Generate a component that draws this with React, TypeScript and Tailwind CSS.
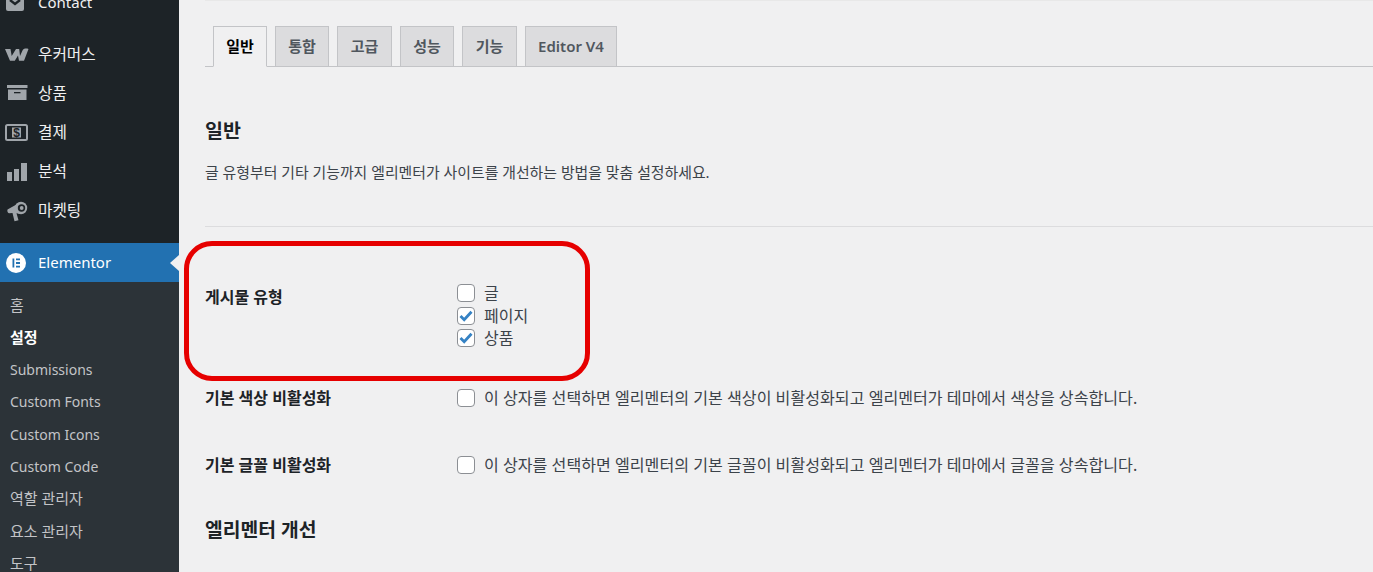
import React from "react";

const font = { fontFamily: '"Noto Sans", "Noto Sans CJK KR", sans-serif' };

function Check({ checked }: { checked?: boolean }) {
  return (
    <span className="w-[18px] h-[18px] shrink-0 rounded-[4px] border border-[#8c8f94] bg-white flex items-center justify-center">
      {checked && (
        <svg width="14" height="14" viewBox="0 0 14 14">
          <path d="M1.5 7 L5.2 10.8 L12.5 2.8" fill="none" stroke="#3582c4" strokeWidth="2.8" />
        </svg>
      )}
    </span>
  );
}

function Tab({ label, active, w }: { label: string; active?: boolean; w: string }) {
  return (
    <div
      className={`${w} h-[41px] flex items-center justify-center border border-[#c3c4c7] text-[15px] font-semibold ${
        active ? "bg-[#f0f0f1] text-black border-b-[#f0f0f1]" : "bg-[#dcdcde] text-[#50575e]"
      }`}
    >
      {label}
    </div>
  );
}

function Icon({ name }: { name: string }) {
  const c = "#a0a5aa";
  if (name === "mail")
    return (
      <svg width="20" height="20" viewBox="0 0 20 20">
        <path d="M1 2h18v14a2 2 0 0 1-2 2H3a2 2 0 0 1-2-2z" fill={c} />
        <path d="M5 7l5 4 5-4" fill="none" stroke="#1d2327" strokeWidth="2.4" />
      </svg>
    );
  if (name === "woo")
    return (
      <svg width="24" height="20" viewBox="0 0 24 20">
        <path d="M0 4h5.500l1.200 7L11 4h3.200l.8 7 2.500-5.500C18.500 3.500 21 3 23.500 4L19 15.800h-5l-1-5.300-3.200 5.300H5z" fill={c} />
      </svg>
    );
  if (name === "box")
    return (
      <svg width="23" height="20" viewBox="0 0 23 20">
        <path d="M2 1h20.500v3H2z" fill={c} />
        <path d="M3 5.500h18.500V16H3z" fill={c} />
        <path d="M9 8h6.500v1.300H9z" fill="#1d2327" />
      </svg>
    );
  if (name === "pay")
    return (
      <svg width="23" height="20" viewBox="0 0 23 20">
        <rect x="1" y="2" width="21" height="15" rx="1.500" fill="none" stroke={c} strokeWidth="2" />
        <path d="M7 4.500h9v10H7z" fill={c} />
        <text x="11.500" y="13.600" fontSize="12" fontWeight="700" textAnchor="middle" fill="#1d2327" fontFamily="Liberation Sans">$</text>
      </svg>
    );
  if (name === "bars")
    return (
      <svg width="22" height="20" viewBox="0 0 22 20">
        <path d="M2 10h5v9H2zM9 7h5v12H9zM16 1h6v18h-6z" fill={c} />
      </svg>
    );
  return (
    <svg width="23" height="22" viewBox="0 0 23 22">
      <path d="M2.500 9.500L15 2.500l2 11.500-5.500-.8 2 7-4 1L7.500 13 4 13.200C2.500 13 2 11 2.500 9.500z" fill={c} />
      <circle cx="16" cy="8" r="6.200" fill={c} />
      <circle cx="16.500" cy="8" r="3.700" fill="#1d2327" />
      <circle cx="16.700" cy="8" r="1.900" fill={c} />
    </svg>
  );
}

function MenuItem({ icon, label, size = "text-[15.700px]" }: { icon: string; label: string; size?: string }) {
  return (
    <div className={`h-[39px] flex items-center ${size} text-[#f0f0f1]`}>
      <span className="w-[38px] pl-[5px] flex items-center shrink-0">
        <Icon name={icon} />
      </span>
      {label}
    </div>
  );
}

const subs = [
  ["홈", "text-[15px]"],
  ["설정", "text-[15px]"],
  ["Submissions", "text-[14px]"],
  ["Custom Fonts", "text-[14px]"],
  ["Custom Icons", "text-[14px]"],
  ["Custom Code", "text-[14px]"],
  ["역할 관리자", "text-[15px]"],
  ["요소 관리자", "text-[15px]"],
  ["도구", "text-[15px]"],
];

function Row({ label, text }: { label: string; text: string }) {
  return (
    <div className="flex items-center h-[67px]">
      <div className="w-[252px] font-bold text-[16px] text-[#1d2327]">{label}</div>
      <div className="flex items-center text-[16.100px] text-[#3c434a]">
        <Check />
        <span className="ml-[9px]">{text}</span>
      </div>
    </div>
  );
}

export default function App() {
  return (
    <div className="relative w-[1373px] h-[572px] overflow-hidden flex bg-[#f0f0f1]" style={font}>
      <aside className="w-[179px] shrink-0 bg-[#1d2327] h-full overflow-hidden">
        <div className="-mt-[17px]">
          <MenuItem icon="mail" label="Contact" size="text-[15px]" />
          <div className="h-[13px]" />
          <MenuItem icon="woo" label="우커머스" />
          <MenuItem icon="box" label="상품" />
          <MenuItem icon="pay" label="결제" />
          <MenuItem icon="bars" label="분석" />
          <MenuItem icon="mega" label="마켓팅" />
          <div className="h-[13px]" />
          <div className="relative h-[39px] bg-[#2271b1] flex items-center text-[15px] text-white">
            <span className="w-[38px] pl-[6px] shrink-0">
              <svg width="20" height="20" viewBox="0 0 20 20">
                <circle cx="10" cy="10" r="10" fill="#fff" />
                <path d="M6.500 5.500h1.800v9H6.500zM10 5.500h4v1.700h-4zM10 9.100h4v1.800h-4zM10 12.800h4v1.700h-4z" fill="#2271b1" />
              </svg>
            </span>
            Elementor
            <span className="absolute right-0 top-[12px] w-0 h-0 border-y-[8px] border-y-transparent border-r-[9px] border-r-[#f0f0f1]" />
          </div>
          <div className="bg-[#2c3338] pt-[7px] pb-4">
            {subs.map(([s, size]) => (
              <div
                key={s}
                className={`h-[32.250px] flex items-center pl-[10px] ${size} ${
                  s === "설정" ? "font-bold text-white" : "text-[#c3c4c7]"
                }`}
              >
                {s}
              </div>
            ))}
          </div>
        </div>
      </aside>
      <main className="flex-1 min-w-0 pl-[26px]">
        <div className="h-px bg-[#e8e8e8]" />
        <div className="pt-[25px] flex items-start gap-[8px] pl-[8px] border-b border-[#c3c4c7] h-[66px]">
          <Tab label="일반" active w="w-[54px]" />
          <Tab label="통합" w="w-[54px]" />
          <Tab label="고급" w="w-[55px]" />
          <Tab label="성능" w="w-[54px]" />
          <Tab label="기능" w="w-[55px]" />
          <Tab label="Editor V4" w="w-[92px]" />
        </div>
        <h2 className="mt-[49px] text-[19.500px] leading-[30px] font-bold text-[#1d2327]">일반</h2>
        <p className="mt-[14px] text-[14.900px] leading-[24px] text-[#3c434a]">
          글 유형부터 기타 기능까지 엘리멘터가 사이트를 개선하는 방법을 맞춤 설정하세요.
        </p>
        <div className="mt-[42px] border-t border-[#dcdcde]" />
        <div className="flex mt-[55px]">
          <div className="w-[252px] mt-[4px] font-bold text-[16px] leading-[22px] text-[#1d2327]">게시물 유형</div>
          <div className="flex flex-col text-[16px] text-[#3c434a]">
            {[
              ["글", false],
              ["페이지", true],
              ["상품", true],
            ].map(([l, c]) => (
              <label key={l as string} className="h-[22.500px] flex items-center">
                <Check checked={c as boolean} />
                <span className="ml-[9px]">{l as string}</span>
              </label>
            ))}
          </div>
        </div>
        <div className="mt-[15px]">
          <Row label="기본 색상 비활성화" text="이 상자를 선택하면 엘리멘터의 기본 색상이 비활성화되고 엘리멘터가 테마에서 색상을 상속합니다." />
          <Row label="기본 글꼴 비활성화" text="이 상자를 선택하면 엘리멘터의 기본 글꼴이 비활성화되고 엘리멘터가 테마에서 글꼴을 상속합니다." />
        </div>
        <h2 className="mt-[16px] text-[19.300px] leading-[30px] font-bold text-[#1d2327]">엘리멘터 개선</h2>
      </main>
      <div className="absolute left-[184px] top-[241px] w-[406px] h-[140px] border-[5px] border-[#e60000] rounded-[28px] pointer-events-none" />
    </div>
  );
}
